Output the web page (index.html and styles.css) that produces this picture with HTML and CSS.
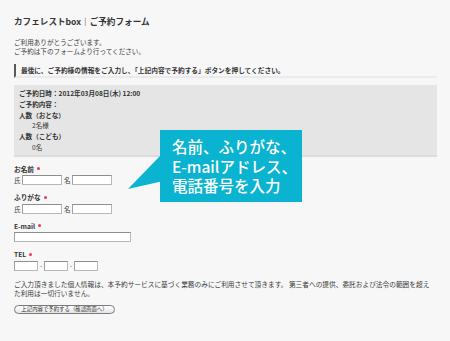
FILE: index.html
```html
<!DOCTYPE html>
<html lang="ja">
<head>
<meta charset="utf-8">
<title>カフェレストbox｜ご予約フォーム</title>
<link rel="stylesheet" href="styles.css">
</head>
<body>
<div class="page">
  <h1 class="title">カフェレストbox｜ご予約フォーム</h1>
  <p class="intro">ご利用ありがとうございます。<br>ご予約は下のフォームより行ってください。</p>
  <p class="notice">最後に、ご予約様の情報をご入力し、「上記内容で予約する」ボタンを押してください。</p>
  <div class="summary">
    <div class="sline b">ご予約日時：2012年03月08日(木) 12:00</div>
    <div class="sline b">ご予約内容：</div>
    <div class="sline b">人数（おとな）</div>
    <div class="sline val">2名様</div>
    <div class="sline b">人数（こども）</div>
    <div class="sline val">0名</div>
  </div>
  <div class="field">
    <div class="label">お名前<span class="req"></span></div>
    <div class="row"><span class="pre">氏</span><span class="inp w40"></span><span class="pre mid">名</span><span class="inp w40"></span></div>
  </div>
  <div class="field">
    <div class="label">ふりがな<span class="req"></span></div>
    <div class="row"><span class="pre">氏</span><span class="inp w40"></span><span class="pre mid">名</span><span class="inp w40"></span></div>
  </div>
  <div class="field">
    <div class="label">E-mail<span class="req"></span></div>
    <div class="row"><span class="inp w117"></span></div>
  </div>
  <div class="field">
    <div class="label">TEL<span class="req"></span></div>
    <div class="row"><span class="inp w24"></span><span class="dash">-</span><span class="inp w24"></span><span class="dash">-</span><span class="inp w24"></span></div>
  </div>
  <p class="privacy">ご入力頂きました個人情報は、本予約サービスに基づく業務のみにご利用させて頂きます。 第三者への提供、委託および法令の範囲を超えた利用は一切行いません。</p>
  <div class="btnrow"><span class="btn">上記内容で予約する（確認画面へ）</span></div>

  <div class="callout">名前、ふりがな、<br>E-mailアドレス、<br>電話番号を入力</div>
</div>
</body>
</html>
```
FILE: styles.css
```css
html, body {
  margin: 0;
  padding: 0;
  background: #f7f7f7;
}
body {
  font-family: "Noto Sans CJK JP", "Liberation Sans", sans-serif;
  color: #3a3a3a;
}
.page {
  position: relative;
  width: 450px;
  height: 341px;
  box-sizing: border-box;
  padding: 16px 13px 0 14px;
}
.title {
  margin: 0;
  font-size: 8.6px;
  line-height: 10px;
  font-weight: 700;
  color: #333;
}
.intro {
  margin: 12px 0 0;
  font-size: 6.6px;
  line-height: 8.5px;
}
.notice {
  margin: 9px 0 0;
  font-size: 6.7px;
  line-height: 12px;
  font-weight: 700;
  color: #333;
  border-left: 2.5px solid #5a5a5a;
  border-bottom: 2px solid #ebebee;
  padding-left: 5px;
}
.summary {
  margin-top: 7px;
  background: #e5e5e5;
  border-bottom: 2px solid #dcdce0;
  padding: 3px 5px 2px;
  font-size: 6.6px;
}
.sline {
  line-height: 10.8px;
}
.b {
  font-weight: 700;
  color: #333;
}
.val {
  padding-left: 13px;
}
.field {
  margin-top: 7px;
}
.label {
  font-size: 6.7px;
  line-height: 10px;
  font-weight: 700;
  color: #333;
  display: flex;
  align-items: center;
}
.req {
  width: 3px;
  height: 3px;
  border-radius: 50%;
  background: #ee3a4a;
  margin-left: 3px;
}
.row {
  margin-top: 1.5px;
  display: flex;
  align-items: center;
  height: 10px;
  font-size: 6.6px;
}
.pre {
  margin-right: 1.5px;
}
.pre.mid {
  margin-left: 2px;
}
.inp {
  box-sizing: border-box;
  height: 10px;
  background: #fff;
  border: 1px solid #b8b8b8;
  border-top-color: #8e8e8e;
  border-left-color: #a0a0a0;
}
.w40 { width: 40px; }
.w117 { width: 117px; }
.w24 { width: 24px; }
.dash {
  width: 6px;
  text-align: center;
  font-size: 6px;
}
.privacy {
  margin: 9px 0 0;
  max-width: 420px;
  font-size: 6.7px;
  line-height: 9px;
}
.btnrow {
  margin-top: 7.5px;
  display: flex;
}
.btn {
  box-sizing: border-box;
  width: 101px;
  height: 9px;
  border: 1px solid #7a7a7a;
  border-radius: 5px;
  background: linear-gradient(#ffffff, #e6e6e6);
  font-size: 5.4px;
  line-height: 7px;
  text-align: center;
  color: #333;
}
.callout {
  position: absolute;
  left: 160px;
  top: 130px;
  width: 142px;
  height: 72px;
  box-sizing: border-box;
  background: #0ab3cf;
  color: #fff;
  font-size: 15.5px;
  line-height: 19.5px;
  font-weight: 500;
  padding: 7px 0 0 12px;
  white-space: nowrap;
}
.callout::before {
  content: "";
  position: absolute;
  left: -32px;
  top: 25px;
  width: 33px;
  height: 34px;
  background: #0ab3cf;
  clip-path: polygon(100% 0, 0 100%, 100% 78%);
}
```
